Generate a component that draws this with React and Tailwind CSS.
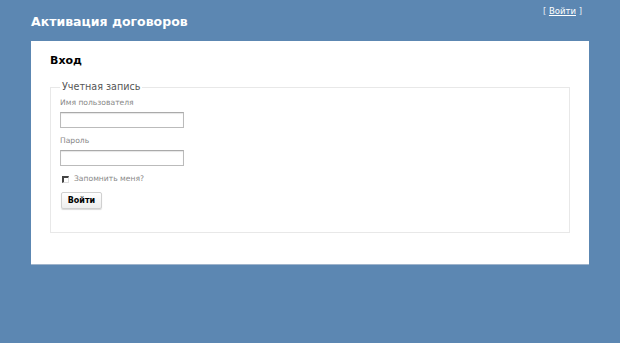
export default function App() {
  return (
    <div
      className="min-h-[343px] bg-[#5c87b2] text-[#696969]"
      style={{ fontFamily: '"DejaVu Sans", Verdana, sans-serif' }}
    >
      <div className="w-[558px] ml-[31px]">
        <div className="flex items-start justify-between h-[41px]">
          <h1 className="pt-[14px] text-[12.5px] font-bold leading-[15px] text-white">
            Активация договоров
          </h1>
          <div className="pt-[5px] pr-[7px] text-[8.5px] leading-[12px] text-[#e6eef6]">
            [ <a href="#" className="text-white underline">Войти</a> ]
          </div>
        </div>
        <div className="bg-white border-b border-[#9fb4cc] h-[224px] px-[19px] pt-[13px]">
          <h2 className="text-[11px] font-bold leading-[14px] text-black">Вход</h2>
          <fieldset className="mt-[13px] border border-[#e8e8e8] h-[152px] px-[9px]">
            <legend className="px-[2px] text-[9.6px] leading-[12px] text-[#555]">
              Учетная запись
            </legend>
            <div className="text-[7.6px] leading-[10px] mt-[5px] text-[#888]">Имя пользователя</div>
            <input
              type="text"
              className="mt-[4px] block w-[124px] h-[16px] border border-[#bbb] border-t-[#aaa] bg-white shadow-[inset_0_1px_1px_rgba(0,0,0,0.1)]"
            />
            <div className="text-[7.6px] leading-[10px] mt-[8px] text-[#888]">Пароль</div>
            <input
              type="password"
              className="mt-[4px] block w-[124px] h-[16px] border border-[#bbb] border-t-[#aaa] bg-white shadow-[inset_0_1px_1px_rgba(0,0,0,0.1)]"
            />
            <label className="mt-[8px] flex items-center gap-[5px] pl-[2px] text-[7.6px] leading-[10px] text-[#888]">
              <span className="block w-[7px] h-[7px] border-l-2 border-t-2 border-[#444] border-r border-b border-r-[#ddd] border-b-[#ddd]" />
              Запомнить меня?
            </label>
            <button className="mt-[8px] ml-[1px] block w-[41px] h-[17px] rounded-[2px] border border-[#d0d0d0] bg-gradient-to-b from-white to-[#eee] shadow-[0_1px_1px_rgba(0,0,0,0.15)] text-[8px] font-bold text-black">
              Войти
            </button>
          </fieldset>
        </div>
      </div>
    </div>
  );
}
